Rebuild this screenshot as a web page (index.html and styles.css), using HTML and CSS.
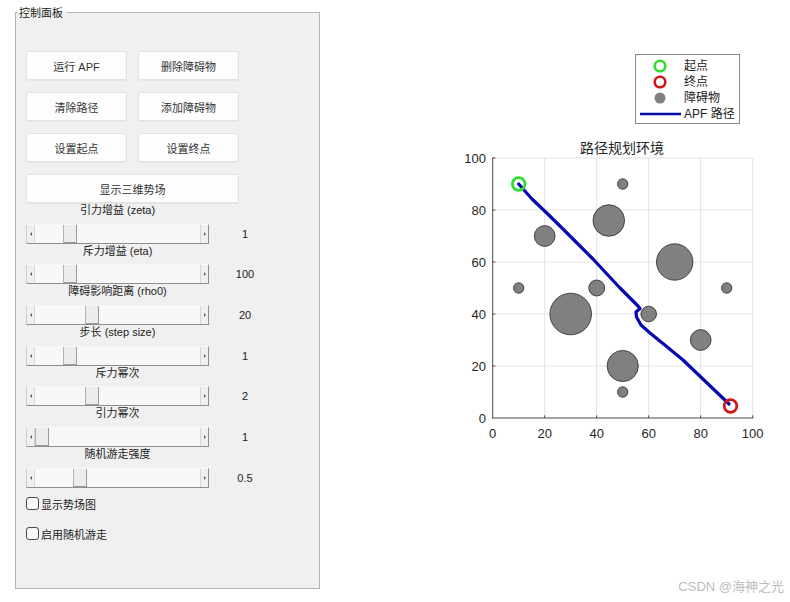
FILE: index.html
```html
<!DOCTYPE html>
<html lang="zh-CN">
<head>
<meta charset="utf-8">
<title>APF 路径规划</title>
<link rel="stylesheet" href="styles.css">
</head>
<body>
<fieldset class="panel">
  <legend class="panel-title">控制面板</legend>
  <div class="panel-body">
    <div class="btn-grid">
      <button class="btn">运行 APF</button>
      <button class="btn">删除障碍物</button>
      <button class="btn">清除路径</button>
      <button class="btn">添加障碍物</button>
      <button class="btn">设置起点</button>
      <button class="btn">设置终点</button>
      <button class="btn wide">显示三维势场</button>
    </div>

    <div class="control">
      <div class="ctl-label">引力增益 (zeta)</div>
      <div class="slider-row">
        <div class="slider"><span class="arrow left"></span><span class="track"><span class="thumb" style="margin-left:28px"></span></span><span class="arrow right"></span></div>
        <span class="value">1</span>
      </div>
    </div>
    <div class="control">
      <div class="ctl-label">斥力增益 (eta)</div>
      <div class="slider-row">
        <div class="slider"><span class="arrow left"></span><span class="track"><span class="thumb" style="margin-left:28px"></span></span><span class="arrow right"></span></div>
        <span class="value">100</span>
      </div>
    </div>
    <div class="control">
      <div class="ctl-label">障碍影响距离 (rho0)</div>
      <div class="slider-row">
        <div class="slider"><span class="arrow left"></span><span class="track"><span class="thumb" style="margin-left:50px"></span></span><span class="arrow right"></span></div>
        <span class="value">20</span>
      </div>
    </div>
    <div class="control">
      <div class="ctl-label">步长 (step size)</div>
      <div class="slider-row">
        <div class="slider"><span class="arrow left"></span><span class="track"><span class="thumb" style="margin-left:28px"></span></span><span class="arrow right"></span></div>
        <span class="value">1</span>
      </div>
    </div>
    <div class="control">
      <div class="ctl-label">斥力幂次</div>
      <div class="slider-row">
        <div class="slider"><span class="arrow left"></span><span class="track"><span class="thumb" style="margin-left:50px"></span></span><span class="arrow right"></span></div>
        <span class="value">2</span>
      </div>
    </div>
    <div class="control">
      <div class="ctl-label">引力幂次</div>
      <div class="slider-row">
        <div class="slider"><span class="arrow left"></span><span class="track"><span class="thumb" style="margin-left:0px"></span></span><span class="arrow right"></span></div>
        <span class="value">1</span>
      </div>
    </div>
    <div class="control">
      <div class="ctl-label">随机游走强度</div>
      <div class="slider-row">
        <div class="slider"><span class="arrow left"></span><span class="track"><span class="thumb" style="margin-left:38px"></span></span><span class="arrow right"></span></div>
        <span class="value">0.5</span>
      </div>
    </div>

    <label class="check first"><input type="checkbox" class="box">显示势场图</label>
    <label class="check second"><input type="checkbox" class="box">启用随机游走</label>
  </div>
</fieldset>

<div class="figure">
  <svg class="plot" width="470" height="602" viewBox="320 0 470 602" xmlns="http://www.w3.org/2000/svg">
    <!-- legend -->
    <rect x="635.5" y="54.5" width="104" height="69" fill="#fff" stroke="#858585" stroke-width="1"/>
    <circle cx="660" cy="66" r="5.3" fill="none" stroke="#2fdc2f" stroke-width="2.6"/>
    <circle cx="660" cy="82" r="5.3" fill="none" stroke="#d01818" stroke-width="2.6"/>
    <circle cx="660" cy="98" r="5.5" fill="#808080"/>
    <line x1="640" y1="114" x2="681" y2="114" stroke="#0a0aa8" stroke-width="2.5"/>
    <g class="legend-text">
      <text x="684" y="66">起点</text>
      <text x="684" y="82">终点</text>
      <text x="684" y="98">障碍物</text>
      <text x="684" y="114">APF 路径</text>
    </g>

    <!-- title -->
    <text class="title" x="622" y="147">路径规划环境</text>

    <!-- axes background & grid -->
    <rect x="492.7" y="158" width="260" height="260" fill="#fff"/>
    <g stroke="#e3e3e3" stroke-width="1">
      <line x1="544.7" y1="158" x2="544.7" y2="418"/>
      <line x1="596.7" y1="158" x2="596.7" y2="418"/>
      <line x1="648.7" y1="158" x2="648.7" y2="418"/>
      <line x1="700.7" y1="158" x2="700.7" y2="418"/>
      <line x1="752.7" y1="158" x2="752.7" y2="418"/>
      <line x1="492.7" y1="366" x2="752.7" y2="366"/>
      <line x1="492.7" y1="314" x2="752.7" y2="314"/>
      <line x1="492.7" y1="262" x2="752.7" y2="262"/>
      <line x1="492.7" y1="210" x2="752.7" y2="210"/>
      <line x1="492.7" y1="158" x2="752.7" y2="158"/>
    </g>

    <!-- obstacles -->
    <g fill="#808080" stroke="#2a2a2a" stroke-width="0.8">
      <circle cx="518.7" cy="288" r="5.2"/>
      <circle cx="544.7" cy="236" r="10.4"/>
      <circle cx="608.8" cy="220.5" r="15.8"/>
      <circle cx="622.7" cy="184" r="5.2"/>
      <circle cx="674.7" cy="262" r="18.2"/>
      <circle cx="726.7" cy="288" r="5.2"/>
      <circle cx="596.7" cy="288" r="8"/>
      <circle cx="570.7" cy="314" r="20.8"/>
      <circle cx="648.7" cy="314" r="7.8"/>
      <circle cx="700.7" cy="340" r="10.4"/>
      <circle cx="622.7" cy="366" r="15.6"/>
      <circle cx="622.7" cy="392" r="5.2"/>
    </g>

    <!-- axis lines and ticks -->
    <g stroke="#4a4a4a" stroke-width="1" fill="none">
      <line x1="492.7" y1="157.5" x2="492.7" y2="418.5"/>
      <line x1="492.2" y1="418" x2="753.2" y2="418"/>
      <line x1="544.7" y1="418" x2="544.7" y2="415.4"/>
      <line x1="596.7" y1="418" x2="596.7" y2="415.4"/>
      <line x1="648.7" y1="418" x2="648.7" y2="415.4"/>
      <line x1="700.7" y1="418" x2="700.7" y2="415.4"/>
      <line x1="752.7" y1="418" x2="752.7" y2="415.4"/>
      <line x1="492.7" y1="366" x2="495.3" y2="366"/>
      <line x1="492.7" y1="314" x2="495.3" y2="314"/>
      <line x1="492.7" y1="262" x2="495.3" y2="262"/>
      <line x1="492.7" y1="210" x2="495.3" y2="210"/>
      <line x1="492.7" y1="158" x2="495.3" y2="158"/>
    </g>

    <!-- path -->
    <polyline fill="none" stroke="#0808b0" stroke-width="3.2" stroke-linejoin="round" stroke-linecap="round"
      points="518.7,184 532,199 546.7,213 563,229 578,244 593,259 606,273 620,288 630,298 638,306 640,308.5 636,312 636.5,317 641,325 650,333 666,346 683,360 706,382 729,404"/>

    <!-- start / goal -->
    <circle cx="518.7" cy="184" r="6.3" fill="none" stroke="#2fdc2f" stroke-width="2.8"/>
    <circle cx="730.5" cy="406" r="6.3" fill="none" stroke="#d01818" stroke-width="2.8"/>

    <!-- tick labels -->
    <g class="tick-y">
      <text x="486" y="418">0</text>
      <text x="486" y="366">20</text>
      <text x="486" y="314">40</text>
      <text x="486" y="262">60</text>
      <text x="486" y="210">80</text>
      <text x="486" y="158">100</text>
    </g>
    <g class="tick-x">
      <text x="492.7" y="433">0</text>
      <text x="544.7" y="433">20</text>
      <text x="596.7" y="433">40</text>
      <text x="648.7" y="433">60</text>
      <text x="700.7" y="433">80</text>
      <text x="752.7" y="433">100</text>
    </g>
  </svg>
</div>

<div class="watermark">CSDN @海神之光</div>
</body>
</html>
```

FILE: styles.css
```css
html, body {
  margin: 0;
  padding: 0;
}

body {
  width: 790px;
  height: 602px;
  overflow: hidden;
  position: relative;
  display: flex;
  align-items: flex-start;
  background: #ffffff;
  font-family: "Liberation Sans", "Noto Sans CJK SC", sans-serif;
  font-size: 11px;
  color: #222222;
}

/* ---------- control panel ---------- */
.panel {
  margin: 5px 0 0 15px;
  padding: 0;
  width: 305px;
  height: 584px;
  box-sizing: border-box;
  border: 1px solid #b4b4b4;
  background: #f0f0f0;
  min-width: 0;
  flex: none;
}

.panel-title {
  margin-left: 2px;
  padding: 0 4px 0 1px;
  font-size: 11px;
  line-height: 14px;
  color: #222;
  font-family: "Noto Sans CJK SC", sans-serif;
}

.panel-body {
  padding: 32px 0 0 10px;
}

.btn-grid {
  display: grid;
  grid-template-columns: 101px 101px;
  grid-auto-rows: 29px;
  column-gap: 11px;
  row-gap: 12px;
}

.btn {
  margin: 0;
  padding: 0;
  background: #fdfdfd;
  border: 1px solid #e2e2e2;
  border-radius: 2px;
  box-shadow: 0 1px 0 #e6e6e6;
  font-family: "Liberation Sans", "Noto Sans CJK SC", sans-serif;
  font-size: 11px;
  color: #333;
  display: flex;
  align-items: center;
  justify-content: center;
}

.btn.wide {
  grid-column: span 2;
}

.control {
  display: flex;
  flex-direction: column;
}

.ctl-label {
  width: 183px;
  text-align: center;
  line-height: 15.7px;
  height: 15.7px;
  margin-bottom: 5px;
  color: #222;
  white-space: nowrap;
}

.slider-row {
  display: flex;
  align-items: center;
}

.slider {
  width: 183px;
  height: 20px;
  box-sizing: border-box;
  display: flex;
  background: #f0f0f0;
  border-left: 1px solid #cfcfcf;
  border-top: 1px solid #f7f7f7;
  border-right: 1px solid #8e8e8e;
  border-bottom: 1px solid #8e8e8e;
}

.arrow {
  width: 7px;
  display: flex;
  align-items: center;
  justify-content: center;
}

.arrow.left::before {
  content: "";
  border-right: 2px solid #606060;
  border-top: 2px solid transparent;
  border-bottom: 2px solid transparent;
}

.arrow.right::before {
  content: "";
  border-left: 2px solid #606060;
  border-top: 2px solid transparent;
  border-bottom: 2px solid transparent;
}

.track {
  flex: 1;
  display: flex;
  background: #f8f8f8;
  border-left: 1px solid #d6d6d6;
  border-right: 1px solid #d6d6d6;
}

.thumb {
  width: 14px;
  flex: none;
  box-sizing: border-box;
  background: #ececec;
  border-left: 1px solid #b2b2b2;
  border-right: 1px solid #9a9a9a;
  border-bottom: 1px solid #9a9a9a;
}

.value {
  width: 72px;
  text-align: center;
  font-size: 11px;
  color: #222;
}

.check {
  display: flex;
  align-items: center;
  gap: 2px;
  height: 16px;
  color: #222;
  font-family: "Noto Sans CJK SC", sans-serif;
}

.check.first {
  margin-top: 8px;
}

.check.second {
  margin-top: 14px;
}

.box {
  appearance: none;
  -webkit-appearance: none;
  margin: 0;
  width: 13px;
  height: 13px;
  box-sizing: border-box;
  border: 1px solid #4a4a4a;
  border-radius: 3px;
  background: #f8f8f8;
}

/* ---------- figure ---------- */
.figure {
  flex: 1;
}

.plot {
  display: block;
}

.legend-text text {
  font-family: "Liberation Sans", "Noto Sans CJK SC", sans-serif;
  font-size: 12px;
  fill: #222;
  dominant-baseline: central;
}

.title {
  font-family: "Noto Sans CJK SC", sans-serif;
  font-size: 14px;
  fill: #262626;
  text-anchor: middle;
  dominant-baseline: central;
}

.tick-y text,
.tick-x text {
  font-family: "Liberation Sans", sans-serif;
  font-size: 13px;
  fill: #262626;
  dominant-baseline: central;
}

.tick-y text {
  text-anchor: end;
}

.tick-x text {
  text-anchor: middle;
}

.watermark {
  position: absolute;
  right: 6px;
  bottom: 7px;
  font-family: "Liberation Sans", "Noto Sans CJK SC", sans-serif;
  font-size: 13px;
  color: #bcbcbc;
}
```
